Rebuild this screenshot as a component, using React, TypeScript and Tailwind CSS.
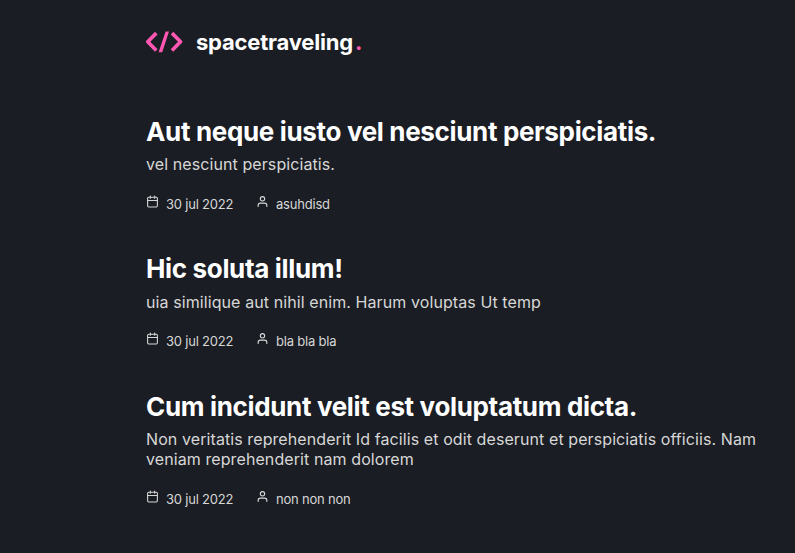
import { FiCalendar, FiUser } from "react-icons/fi";

const posts = [
  { title: "Aut neque iusto vel nesciunt perspiciatis.", subtitle: "vel nesciunt perspiciatis.", author: "asuhdisd" },
  { title: "Hic soluta illum!", subtitle: "uia similique aut nihil enim. Harum voluptas Ut temp", author: "bla bla bla" },
  { title: "Cum incidunt velit est voluptatum dicta.", subtitle: "Non veritatis reprehenderit Id facilis et odit deserunt et perspiciatis officiis. Nam veniam reprehenderit nam dolorem", author: "non non non" },
];

export default function App() {
  return (
    <div className="h-screen overflow-hidden bg-[#1a1d23] pl-[146px] pt-[30px] font-['Inter',sans-serif] text-[#d7d7d7]">
      <header className="flex h-6 items-center">
        <svg width="37" height="22" viewBox="0 0 37 22" fill="#ff57b2">
          <path d="M9 0.8 11.6 3.4 4.3 10.8l7.3 7.4L9 20.8 0 11.5v-1.4zM19.6 0.4H23l-6.8 20.8h-3.6zM27.3 0.8l9 9.3v1.4l-9 9.3-2.6-2.6 7.3-7.4-7.3-7.4z" />
        </svg>
        <span className="ml-[13px] text-[22px] font-bold leading-6 tracking-[-0.2px] text-white">
          spacetraveling<span className="ml-[2px] text-[#ff57b2]">.</span>
        </span>
      </header>
      <main className="mt-[61px] w-[630px]">
        {posts.map((post) => (
          <article key={post.title} className="mb-[37.4px]">
            <h2 className="text-[26px] font-bold leading-[34px] tracking-[-0.34px] text-white">{post.title}</h2>
            <p className="mt-[5.2px] text-[16px] leading-5 tracking-[0.09px]">{post.subtitle}</p>
            <div className="mt-[19.8px] flex h-[21px] text-[13px] leading-[21px] tracking-[-0.21px]">
              <FiCalendar size={13} className="mr-[7px] mt-[1px]" />
              <time className="w-[90px]">30 jul 2022</time>
              <FiUser size={13} className="mr-[7px] mt-[1px]" />
              <span>{post.author}</span>
            </div>
          </article>
        ))}
      </main>
    </div>
  );
}
